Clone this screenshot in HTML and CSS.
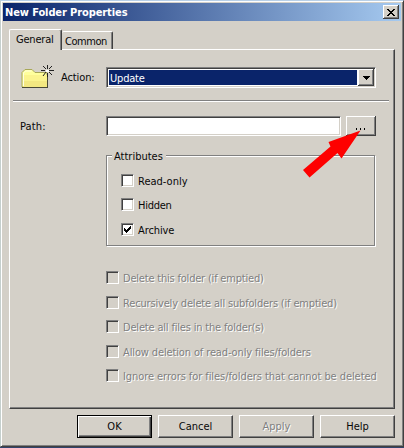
FILE: index.html
```html
<!DOCTYPE html>
<html lang="en">
<head>
<meta charset="utf-8">
<title>New Folder Properties</title>
<link rel="stylesheet" href="styles.css">
</head>
<body>
<div class="window">
  <header class="titlebar">
    <h1>New Folder Properties</h1>
    <button class="close" aria-label="Close"><svg width="8" height="7" shape-rendering="crispEdges"><path d="M0 0h2v1h1v1h2v-1h1v-1h2v1h-1v1h-1v1h-1v1h1v1h1v1h1v1h-2v-1h-1v-1h-2v1h-1v1h-2v-1h1v-1h1v-1h1v-1h-1v-1h-1v-1h-1z"/></svg></button>
  </header>
  <nav class="tabs">
    <div class="tab active"><span>General</span></div>
    <div class="tab common"><span>Common</span></div>
  </nav>
  <main class="panel">
    <div class="action-row">
      <svg class="folder" width="34" height="26" viewBox="0 0 34 26">
        <path d="M1 22V7.500l3-3h7l3 3h12v15z" fill="#ffff9c" stroke="#a8a858"/>
        <path d="M2 10h24v12H2z" fill="#fbf48e"/>
        <path d="M2 16h24v6H2z" fill="#eedf78" opacity=".6"/>
        <path d="M2.500 21V8l2-2h6" stroke="#ffffe0" fill="none"/>
        <path d="M1 22.500h26M26.500 9v14" stroke="#494936" fill="none"/>
        <path d="M26.500 0v4M26.500 8v4M20 5.500h4M28 5.500h5M22 1l3 3M31 1l-3 3M22 11l3-4M31 10l-3-3" stroke="#222" fill="none"/>
        <path d="M25 5h3v2h-3z" fill="#fff"/>
      </svg>
      <span class="label action">Action:</span>
      <div class="combo"><div class="value"><span>Update</span></div><div class="drop"><svg width="7" height="4" shape-rendering="crispEdges"><path d="M0 0h7v1h-1v1h-1v1h-1v1h-1v-1h-1v-1h-1v-1h-1z"/></svg></div></div>
    </div>
    <div class="rule"></div>
    <div class="path-row">
      <span class="label path">Path:</span>
      <div class="field"></div>
      <div class="browse"><i></i><i></i><i></i></div>
    </div>
    <section class="group">
      <span class="legend">Attributes</span>
      <div class="check"><i></i><span class="t1">Read-only</span></div>
      <div class="check"><i></i><span class="t2">Hidden</span></div>
      <div class="check"><i><svg width="7" height="7" shape-rendering="crispEdges"><path d="M0 2h1v1h1v1h1v-1h1v-1h1v-1h1v-1h1v3h-1v1h-1v1h-1v1h-1v1h-1v-1h-1v-1h-1z"/></svg></i><span class="t3">Archive</span></div>
    </section>
    <section class="options">
      <div class="check off"><i></i><span class="d1">Delete this folder (if emptied)</span></div>
      <div class="check off"><i></i><span class="d2">Recursively delete all subfolders (if emptied)</span></div>
      <div class="check off"><i></i><span class="d3">Delete all files in the folder(s)</span></div>
      <div class="check off"><i></i><span class="d4">Allow deletion of read-only files/folders</span></div>
      <div class="check off"><i></i><span class="d5">Ignore errors for files/folders that cannot be deleted</span></div>
    </section>
  </main>
  <footer class="actions">
    <button class="btn default"><span>OK</span></button>
    <button class="btn">Cancel</button>
    <button class="btn disabled">Apply</button>
    <button class="btn">Help</button>
  </footer>
</div>
<svg class="pointer" width="60" height="52"><path d="M57.500 1.500L38.500 29.500 34.500 24 6.500 48.500 0 41 27.500 17.500 25.500 13z" fill="#fe0000"/></svg>
</body>
</html>
```
FILE: styles.css
```css
* { box-sizing: border-box; }
body { margin: 0; width: 404px; height: 448px; overflow: hidden; background: #34446c; color: #080808; font: 11px/13px "DejaVu Sans Condensed", "DejaVu Sans", sans-serif; font-stretch: condensed; }
span { white-space: nowrap; }
svg { display: block; }
button { font: inherit; color: inherit; padding: 0; margin: 0; border-radius: 0; }
.window { width: 404px; height: 447px; background: #d4d0c8; border: 1px solid; border-color: #b8d0e8 #404040 #404040 #c5cfcd; box-shadow: inset 1px 1px #fff, inset -1px -1px #808080; padding: 2px; }
.titlebar { height: 18px; display: flex; align-items: center; justify-content: space-between; padding: 0 2px; background: linear-gradient(90deg, #0a246a, #a6caf0); }
h1 { margin: 0; color: #fff; font-size: 11px; line-height: 14px; letter-spacing: -.1px; padding-top: 1px; }
.close { width: 16px; height: 14px; border: 0; background: #d4d0c8; box-shadow: inset -1px -1px #404040, inset 1px 1px #fff, inset -2px -2px #808080; display: flex; align-items: center; justify-content: center; }
.tabs { height: 28px; padding-left: 6px; display: flex; align-items: flex-end; }
.tab { position: relative; height: 18px; width: 51px; border-top: 1px solid #fff; border-right: 1px solid #404040; box-shadow: inset -1px 0 #808080; padding: 3px 0 0 3px; border-radius: 2px 2px 0 0; }
.tab.active { height: 21px; width: 53px; margin-bottom: -1px; border-left: 1px solid #fff; padding: 3px 0 0 6px; z-index: 1; background: #d4d0c8; letter-spacing: -.2px; }
.common { letter-spacing: -.45px; }
.panel { margin-left: 6px; width: 386px; height: 360px; border: 1px solid; border-color: #fff #404040 #404040 #fff; box-shadow: inset -1px -1px #808080; }
.action-row { height: 50px; padding: 17px 0 0 11px; display: flex; }
.folder { margin-top: -2px; width: 34px; height: 26px; }
.label.action { margin: 4px 0 0 6px; width: 45px; letter-spacing: -.1px; }
.combo { width: 270px; height: 21px; border: 1px solid; border-color: #808080 #fff #fff #808080; box-shadow: inset 1px 1px #404040, inset -1px -1px #d4d0c8; padding: 1px; background: #fff; display: flex; }
.value { flex: 1; margin: 1px; background: #0a246a; color: #fff; padding: 2px 0 0 1px; letter-spacing: -.2px; }
.drop, .browse { background: #d4d0c8; box-shadow: inset -1px -1px #404040, inset 1px 1px #fff, inset -2px -2px #808080; }
.drop { width: 16px; display: flex; align-items: center; justify-content: center; }
.rule { height: 2px; width: 376px; margin-left: 3px; border-top: 1px solid #808080; border-bottom: 1px solid #fff; }
.path-row { margin-top: 14px; padding-left: 10px; height: 20px; display: flex; }
.label.path { width: 86px; padding-top: 4px; letter-spacing: .15px; }
.field { width: 235px; background: #fff; border: 1px solid; border-color: #808080 #fff #fff #808080; box-shadow: inset 1px 1px #404040, inset -1px -1px #d4d0c8; }
.browse { width: 30px; margin-left: 5px; padding: 12px 0 0 10px; display: flex; gap: 3px; }
.browse i { width: 1px; height: 2px; background: #000; }
.group { position: relative; width: 269px; height: 91px; margin: 19px 0 0 96px; border: 1px solid #808080; box-shadow: 1px 1px #fff, inset 1px 1px #fff; padding: 18px 0 0 14px; }
.legend { position: absolute; left: 5px; top: -6px; padding: 0 3px 0 2px; background: #d4d0c8; }
.check { display: flex; height: 24.500px; }
.check i { width: 13px; height: 13px; padding: 3px; background: #fff; border: 1px solid; border-color: #808080 #fff #fff #808080; box-shadow: inset 1px 1px #404040, inset -1px -1px #d4d0c8; }
.check i svg { margin: -1px 0 0 -1px; }
.check span { margin-left: 4px; padding-top: 1px; }
.group .check:nth-of-type(1) { height: 24px; }
.t2 { letter-spacing: -.25px; }
.t3 { letter-spacing: -.1px; }
.d1 { letter-spacing: -.2px; }
.d2 { letter-spacing: -.17px; }
.d3 { letter-spacing: -.18px; }
.d4 { letter-spacing: -.13px; }
.d5 { letter-spacing: -.07px; }
.options { padding: 25px 0 0 96px; }
.off { color: #808080; text-shadow: 1px 1px #fff; }
.off i { background: #d4d0c8; }
.actions { display: flex; gap: 6px; padding: 6px 0 0 74px; }
.btn { width: 75px; height: 23px; border: 1px solid; border-color: #fff #404040 #404040 #fff; box-shadow: inset -1px -1px #808080; background: #d4d0c8; line-height: 19px; }
.btn.default { border-color: #000; box-shadow: inset 1px 1px #fff, inset -1px -1px #404040, inset -2px -2px #808080; }
.btn.disabled { color: #808080; text-shadow: 1px 1px #fff; }
.pointer { position: absolute; left: 303px; top: 129px; }
```
